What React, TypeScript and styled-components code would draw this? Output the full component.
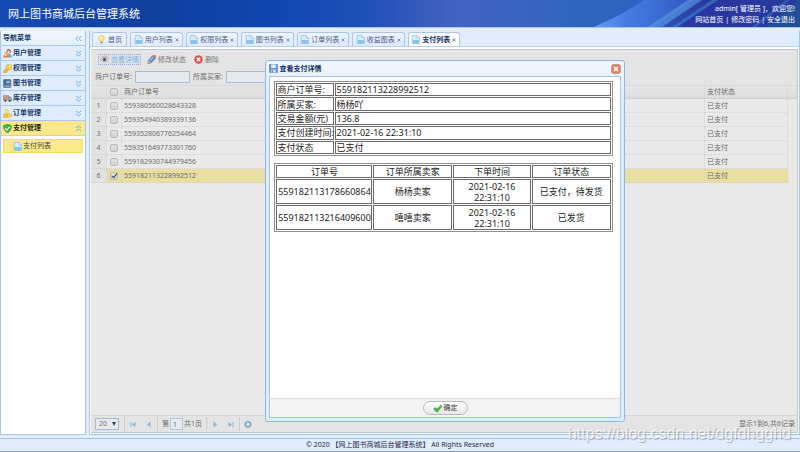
import React from "react";
import styled, { createGlobalStyle, css } from "styled-components";

const GlobalStyle = createGlobalStyle`
  *, *::before, *::after { box-sizing: border-box; }
  body { margin: 0; background: #e3edfb; }
  body, button, input, select, table {
    font-family: "Noto Sans", "Noto Sans CJK SC", sans-serif;
    font-size: 7px;
    line-height: 10px;
  }
  button, input, select { margin: 0; padding: 0; color: inherit; }
`;

const Page = styled.div`
  position: relative;
  display: flex;
  flex-direction: column;
  height: 100vh;
  color: #1d2b45;
`;

const Header = styled.header`
  position: relative;
  flex: none;
  display: flex;
  justify-content: space-between;
  align-items: center;
  height: 27px;
  padding: 0 5px 0 8px;
  color: #fff;
  overflow: hidden;
`;

const HeaderArt = styled.svg`
  position: absolute;
  inset: 0;
  width: 100%;
  height: 100%;
`;

const Title = styled.h1`
  position: relative;
  margin: 0;
  font-size: 11px;
  line-height: 16px;
  font-weight: 400;
`;

const Account = styled.div`
  position: relative;
  display: flex;
  flex-direction: column;
  align-items: flex-end;
  gap: 1px;
  padding-top: 2px;
`;

const Links = styled.nav`
  display: flex;
  gap: 2px;
`;

const HeaderLink = styled.a`
  color: #fff;
  text-decoration: none;
`;

const Main = styled.div`
  flex: 1;
  min-height: 0;
  display: flex;
  gap: 3px;
  padding: 3px 0;
  background: #e3edfb;
  border-top: 1px solid #a9c6ef;
`;

const Sidebar = styled.aside`
  flex: none;
  width: 86px;
  background: #fff;
  border: 1px solid #a3c5f2;
  border-top: 0;
`;

const NavRow = styled.button<{ $active?: boolean; $head?: boolean }>`
  display: flex;
  align-items: center;
  gap: 1px;
  width: 100%;
  height: 15px;
  padding: 0 3px 0 2px;
  border: 0;
  border-bottom: 1px solid #a9c9f4;
  background: ${(p) => (p.$active ? "#fbe88a" : p.$head ? "linear-gradient(#f2f7ff, #e3eeff)" : "#e0ecff")};
  color: #1b3a6b;
  font-weight: 700;
  text-align: left;
  ${(p) => p.$active && css`color: #1d1d1d; border-color: #e3d28a;`}
`;

const NavLabel = styled.span`
  flex: 1;
`;

const SubList = styled.div`
  padding: 3px 2px;
`;

const SubItem = styled.a`
  display: flex;
  align-items: center;
  gap: 1px;
  height: 14px;
  padding-left: 9px;
  border: 1px solid #f7dc55;
  background: #fbea88;
  color: #444;
  text-decoration: none;
`;

const Center = styled.main`
  flex: 1;
  min-width: 0;
  display: flex;
  flex-direction: column;
  border: 1px solid #a3c5f2;
  border-top: 0;
  background: #fff;
`;

const TabBar = styled.div`
  flex: none;
  background: #e0ecff;
  border-bottom: 1px solid #b4d0f5;
  padding: 1px 2px 0;
`;

const TabRow = styled.div`
  display: flex;
  gap: 3px;
  max-width: 368px;
`;

const Tab = styled.div<{ $active?: boolean; $home?: boolean }>`
  display: flex;
  align-items: center;
  justify-content: center;
  flex: ${(p) => (p.$home ? "none" : "1")};
  width: ${(p) => (p.$home ? "35px" : "auto")};
  height: 14px;
  border: 1px solid #a9c6ef;
  border-bottom: 0;
  border-radius: 3px 3px 0 0;
  background: ${(p) => (p.$active ? "#fff" : "linear-gradient(#f1f6ff, #dfeaff)")};
  color: ${(p) => (p.$active ? "#0e2d5f" : "#4a5e80")};
`;

const TabButton = styled.button<{ $active?: boolean }>`
  display: flex;
  align-items: center;
  gap: 2px;
  border: 0;
  background: none;
  font-weight: ${(p) => (p.$active ? 700 : 400)};
  white-space: nowrap;
`;

const CloseTab = styled.button`
  display: flex;
  border: 0;
  padding: 2px 0 2px 2px;
  background: none;
  color: #6f95c8;
`;

const Content = styled.section`
  position: relative;
  flex: 1;
  min-height: 0;
  display: flex;
  flex-direction: column;
  margin: 2px 1px 1px;
  background: #e9e9e9;
  border: 1px solid #bcc7d9;
  border-left: 0;
  color: #6c6c6c;
`;

const Tools = styled.div`
  flex: none;
  background: #e4e4e4;
  padding: 3px 4px 2px;
  border-bottom: 1px solid #d8d8d8;
`;

const ToolRow = styled.div`
  display: flex;
  align-items: center;
  gap: 4px;
  height: 13px;
  padding-left: 3px;
`;

const ToolButton = styled.button<{ $focused?: boolean }>`
  display: flex;
  align-items: center;
  gap: 2px;
  height: 11px;
  padding: 0 1px;
  border: 1px ${(p) => (p.$focused ? "dotted #8ea8ee" : "solid transparent")};
  background: ${(p) => (p.$focused ? "#dae0ea" : "none")};
  color: ${(p) => (p.$focused ? "#86b4e0" : "#777")};
`;

const SearchRow = styled.form`
  display: flex;
  align-items: center;
  gap: 3px;
  height: 17px;
  padding-top: 4px;
`;

const Field = styled.label`
  display: flex;
  align-items: center;
  gap: 3px;
  white-space: nowrap;
`;

const TextBox = styled.input`
  width: 55px;
  height: 12px;
  border: 1px solid #a5bcd9;
  background: #e7e9ee;
`;

const GridWrap = styled.div`
  flex: 1;
  min-height: 0;
  overflow: hidden;
`;

const DataGrid = styled.table`
  width: 100%;
  border-collapse: separate;
  border-spacing: 0;
  table-layout: fixed;
`;

const HeadCell = styled.th<{ $w?: number }>`
  height: 13px;
  width: ${(p) => (p.$w ? `${p.$w}px` : "auto")};
  padding: 0 2px;
  font-weight: 400;
  text-align: left;
  background: linear-gradient(#e6e6e6, #dcdcdc);
  border-right: 1px dotted #cfcfcf;
  border-bottom: 1px solid #d0d0d0;
`;

const GridRow = styled.tr<{ $selected?: boolean }>`
  background: ${(p) => (p.$selected ? "#e8dea0" : "#e9e9e9")};
`;

const Cell = styled.td<{ $gutter?: boolean; $tail?: boolean }>`
  height: 14px;
  padding: 0 2px;
  border-right: 1px dotted #d2d2d2;
  border-bottom: 1px dotted #d2d2d2;
  ${(p) => p.$gutter && css`background: #e2e2e2; text-align: center;`}
  ${(p) => p.$tail && css`background: #e9e9e9; border: 0;`}
`;

const Check = styled.input`
  appearance: none;
  display: block;
  width: 8px;
  height: 8px;
  margin: 0 auto;
  border: 1px solid #b9b9b9;
  border-radius: 2px;
  background: linear-gradient(#e2e2e2, #d2d2d2);
  &:checked::before {
    content: "";
    display: block;
    width: 3px;
    height: 6px;
    margin: -1px 0 0 2px;
    border: solid #444;
    border-width: 0 1px 1px 0;
    transform: rotate(40deg);
  }
`;

const Pager = styled.div`
  flex: none;
  display: flex;
  align-items: center;
  height: 17px;
  padding: 0 2px 0 4px;
  background: #e4e4e4;
  border-top: 1px solid #d3d3d3;
`;

const SelectWrap = styled.span`
  position: relative;
  display: flex;
  margin-right: 5px;
`;

const PageSize = styled.select`
  appearance: none;
  width: 24px;
  height: 12px;
  padding-left: 3px;
  border: 1px solid #a5bcd9;
  border-radius: 0;
  background: #e7e9ee;
`;

const Caret = styled.svg`
  position: absolute;
  right: 3px;
  top: 4px;
  pointer-events: none;
`;

const PagerButton = styled.button`
  display: flex;
  align-items: center;
  justify-content: center;
  width: 16px;
  height: 12px;
  border: 0;
  background: none;
  color: #84b9de;
`;

const Divider = styled.i`
  width: 1px;
  height: 14px;
  background: #cdcdcd;
`;

const PageLabel = styled.label`
  display: flex;
  align-items: center;
  gap: 1px;
  padding: 0 4px;
`;

const PageInput = styled.input`
  width: 13px;
  height: 12px;
  padding-left: 2px;
  border: 1px solid #b5c6dd;
  background: #e7e9ee;
`;

const PagerInfo = styled.span`
  margin-left: auto;
`;

const Overlay = styled.div`
  position: absolute;
  inset: 0 0 0 2px;
  display: flex;
  align-items: center;
  justify-content: center;
`;

const Dialog = styled.div`
  display: flex;
  flex-direction: column;
  width: 51%;
  height: calc(100% - 20px);
  padding: 0 3px 3px;
  border: 1px solid #8fb6ec;
  border-radius: 3px;
  background: linear-gradient(#f0f5ff, #dfebff 40px);
  color: #222;
`;

const DialogHead = styled.div`
  flex: none;
  display: flex;
  align-items: center;
  gap: 1px;
  height: 15px;
  color: #0e2d5f;
  font-weight: 700;
`;

const DialogClose = styled.button`
  display: flex;
  margin-left: auto;
  border: 0;
  background: none;
`;

const DialogBody = styled.div`
  flex: 1;
  min-height: 0;
  padding: 4px 7px 4px 4px;
  border: 1px solid #a3c5f2;
  background: #fff;
`;

const DialogFoot = styled.div`
  flex: none;
  display: flex;
  align-items: center;
  justify-content: center;
  height: 20px;
  border: 1px solid #a3c5f2;
  border-top-color: #ddd;
  margin-top: -1px;
  background: #f3f3f3;
`;

const Confirm = styled.button`
  display: flex;
  align-items: center;
  justify-content: center;
  gap: 2px;
  width: 45px;
  height: 14px;
  border: 1px solid #bbb;
  border-radius: 7px;
  background: linear-gradient(#fff, #e6e6e6);
  color: #333;
`;

const Sheet = styled.table<{ $orders?: boolean }>`
  width: 100%;
  height: ${(p) => (p.$orders ? "69px" : "75px")};
  margin-top: ${(p) => (p.$orders ? "7px" : "0")};
  table-layout: fixed;
  border: 1px solid #8f8f8f;
  border-spacing: 1px;
  font-size: 9px;
  line-height: 11px;
  text-align: ${(p) => (p.$orders ? "center" : "left")};
`;

const sheetCell = css<{ $w?: number }>`
  width: ${(p) => (p.$w ? `${p.$w}px` : "auto")};
  padding: 0;
  border: 1px solid #6a6a6a;
  font-weight: 400;
  white-space: nowrap;
`;
const SheetHead = styled.th`
  ${sheetCell}
`;
const SheetCell = styled.td`
  ${sheetCell}
`;
const Lines = styled.span`
  white-space: pre-line;
`;

const Footer = styled.footer`
  flex: none;
  height: 14px;
  padding-top: 1px;
  border-top: 1px solid #a3c5f2;
  border-bottom: 1px solid #8f9fca;
  background: #e0ecff;
  text-align: center;
`;

const Watermark = styled.div`
  position: absolute;
  right: 9px;
  bottom: 9px;
  font-family: "Liberation Sans", sans-serif;
  font-size: 16px;
  line-height: 18px;
  color: rgba(255, 255, 255, 0.75);
  text-shadow: 1px 1px 1px rgba(110, 110, 110, 0.5);
  pointer-events: none;
`;

type IconName =
  | "page" | "bulb" | "users" | "key" | "book" | "truck" | "order" | "shield"
  | "eye" | "pencil" | "remove" | "save" | "ok";

const art: Record<IconName, React.ReactNode> = {
  page: (
    <>
      <path d="M2 1h9l4 4v10H2z" fill="#d9ecfb" stroke="#7ba9dc" />
      <path d="M3 9h11v6H3z" fill="#7fc4f0" />
      <path d="M11 1v4h4" fill="#fff" stroke="#7ba9dc" />
    </>
  ),
  bulb: (
    <>
      <path d="M8 1a5 5 0 0 0-3 9l1 2h4l1-2a5 5 0 0 0-3-9z" fill="#fbe37a" stroke="#e0b84a" />
      <path d="M6 12h4v3H6z" fill="#8a94a8" />
      <circle cx="7" cy="5" r="2" fill="#fffbe0" />
    </>
  ),
  users: (
    <>
      <circle cx="10" cy="4" r="4" fill="#a8703f" />
      <circle cx="10" cy="5" r="2.500" fill="#f3c79c" />
      <path d="M5 15c0-5 2-6 5-6s6 1 6 6z" fill="#7fa3cc" />
      <circle cx="5" cy="8" r="3" fill="#e8bd7c" />
      <path d="M0 15c0-4 2-5 5-5s5 1 5 5z" fill="#d98f3f" />
      <path d="M3 10l2 3 2-3z" fill="#fff" />
    </>
  ),
  key: (
    <>
      <path d="M7 7l3 3-5 6H1v-4z" fill="#f0b52e" stroke="#d59a2a" />
      <circle cx="10.500" cy="5.500" r="5" fill="#f9cf4e" stroke="#dda62f" />
      <circle cx="12" cy="4" r="1.500" fill="#fff" />
    </>
  ),
  book: (
    <>
      <rect x="1" y="1" width="13" height="14" rx="1" fill="#4f7ca8" stroke="#345d88" />
      <path d="M4 1v14" stroke="#2c4c70" />
      <path d="M6 4h6v3H6z" fill="#a6c6e2" />
      <path d="M2 13h12" stroke="#e8eef5" />
    </>
  ),
  truck: (
    <>
      <path d="M0 3h10v8H0z" fill="#b7a596" stroke="#8a7868" />
      <path d="M1 6h8v2H1z" fill="#d88b55" />
      <path d="M10 5h3l3 3v4h-6z" fill="#8fb0da" stroke="#6280aa" />
      <circle cx="4" cy="12" r="2" fill="#555" />
      <circle cx="12" cy="12" r="2" fill="#555" />
    </>
  ),
  order: (
    <>
      <path d="M4 1h5v8H4z" fill="#ffe488" stroke="#ebb640" />
      <path d="M1 9h7v6H1z" fill="#f8c23c" stroke="#e6a62e" />
      <path d="M8 9l6-1 2 5-6 2z" fill="#ffd65e" stroke="#e6a62e" />
    </>
  ),
  shield: (
    <>
      <path d="M8 0l7 3c0 6-2 10-7 13C3 13 1 9 1 3z" fill="#3fb54a" stroke="#268a36" />
      <path d="M4 8l3 3 5-6" fill="none" stroke="#fff" strokeWidth="2" />
    </>
  ),
  eye: (
    <>
      <path d="M0 8q8-9 16 0-8 8-16 0z" fill="#e9e3da" stroke="#b8946a" />
      <circle cx="8" cy="8" r="3.500" fill="#5b80aa" />
      <circle cx="8" cy="8" r="1.500" fill="#222f44" />
      <path d="M1 5q7-6 14 0" fill="none" stroke="#c59a6a" />
    </>
  ),
  pencil: (
    <>
      <path d="M3 9l7-8 5 5-8 8z" fill="#4f93d0" stroke="#3a78b4" />
      <path d="M5 10l7-7" stroke="#a8d2f2" strokeWidth="2" />
      <path d="M10 2l2-2c2-1 5 2 4 4l-2 2z" fill="#d8725f" />
      <path d="M3 9l4 5-6 2z" fill="#e8c79c" stroke="#7b6a55" />
    </>
  ),
  remove: (
    <>
      <circle cx="8" cy="8" r="7.500" fill="#dc4f4b" />
      <path d="M5 5l6 6M11 5l-6 6" stroke="#fff" strokeWidth="2.500" />
    </>
  ),
  save: (
    <>
      <path d="M1 1h14v14H1z" fill="#5e92de" stroke="#3f71bd" />
      <path d="M4 1h8v6H4z" fill="#f3f8ff" />
      <path d="M4 10h8v5H4z" fill="#dbe7f7" />
      <path d="M5 11h2v4H5z" fill="#3f71bd" />
    </>
  ),
  ok: <path d="M1 9l3-3 3 3 7-7 2 2-9 11z" fill="#4db848" stroke="#349334" />,
};

function Icon({ name, size = 9 }: { name: IconName; size?: number }) {
  return (
    <svg width={size} height={size} viewBox="0 0 16 16" aria-hidden="true">
      {art[name]}
    </svg>
  );
}

function Chevrons({ d }: { d: string }) {
  return (
    <svg width="7" height="7" viewBox="0 0 14 14" fill="none" stroke="#6fb2ea" strokeWidth="2" aria-hidden="true">
      <path d={d} />
    </svg>
  );
}

const DOWN = "M2 2l5 4 5-4M2 8l5 4 5-4";
const UP = "M2 6l5-4 5 4M2 12l5-4 5 4";
const LEFT = "M6 2L2 7l4 5M12 2L8 7l4 5";

const menu: [IconName, string][] = [
  ["users", "用户管理"],
  ["key", "权限管理"],
  ["book", "图书管理"],
  ["truck", "库存管理"],
  ["order", "订单管理"],
];

const tabs = ["用户列表", "权限列表", "图书列表", "订单列表", "收益图表", "支付列表"];

const payments = [
  "559380560028643328",
  "559354940389339136",
  "559352806776254464",
  "559351649773301760",
  "559182930744979456",
  "559182113228992512",
];

const details = [
  ["商户订单号:", "559182113228992512"],
  ["所属买家:", "杨杨吖"],
  ["交易金额(元)", "136.8"],
  ["支付创建时间:", "2021-02-16 22:31:10"],
  ["支付状态", "已支付"],
];

const orders = [
  ["559182113178660864", "杨杨卖家", "2021-02-16\n22:31:10", "已支付，待发货"],
  ["559182113216409600", "嘻嘻卖家", "2021-02-16\n22:31:10", "已发货"],
];

function PagerIcon({ d }: { d: string }) {
  return (
    <svg width="6" height="7" viewBox="0 0 12 14" fill="currentColor" aria-hidden="true">
      <path d={d} />
    </svg>
  );
}

function Banner() {
  return (
    <HeaderArt viewBox="0 0 800 27" preserveAspectRatio="none" aria-hidden="true">
      <defs>
        <linearGradient id="base">
          <stop offset="0" stopColor="#164bb4" />
          <stop offset="0.2" stopColor="#0f3e9f" />
          <stop offset="0.35" stopColor="#1146b0" />
          <stop offset="0.46" stopColor="#1f50b8" />
          <stop offset="0.57" stopColor="#4363c0" />
          <stop offset="0.72" stopColor="#2f66bb" />
          <stop offset="0.8" stopColor="#2f62c2" />
          <stop offset="0.88" stopColor="#2c3aa2" />
          <stop offset="1" stopColor="#1d4a92" />
        </linearGradient>
        <linearGradient id="beam">
          <stop offset="0" stopColor="#6a9cf5" />
          <stop offset="0.3" stopColor="#477ce4" />
          <stop offset="1" stopColor="#3a68cf" stopOpacity="0.5" />
        </linearGradient>
      </defs>
      <rect width="800" height="27" fill="url(#base)" />
      <path d="M594 27Q624 14 644 0H694L652 27z" fill="url(#beam)" />
      <path d="M648 27L688 0H702L662 27z" fill="#5c9fe6" opacity="0.6" />
      <path d="M678 27L716 0H800V27z" fill="#2b35a0" opacity="0.7" />
      <path d="M672 27L712 0H718L677 27z" fill="#3c8fcf" opacity="0.5" />
      <path d="M752 27L786 0H790L756 27z" fill="#3b8fcb" opacity="0.45" />
      <path d="M766 27L798 0H800V27z" fill="#1d5496" opacity="0.8" />
    </HeaderArt>
  );
}

export default function App() {
  return (
    <>
      <GlobalStyle />
      <Page lang="zh-CN">
        <Header>
          <Banner />
          <Title>网上图书商城后台管理系统</Title>
          <Account>
            <span>admin[ 管理员 ]，欢迎您!</span>
            <Links>
              <HeaderLink href="#home">网站首页</HeaderLink>|
              <HeaderLink href="#password">修改密码</HeaderLink>|
              <HeaderLink href="#logout">安全退出</HeaderLink>
            </Links>
          </Account>
        </Header>

        <Main>
          <Sidebar>
            <NavRow $head>
              <NavLabel>导航菜单</NavLabel>
              <Chevrons d={LEFT} />
            </NavRow>
            {menu.map(([icon, label]) => (
              <NavRow key={label}>
                <Icon name={icon} />
                <NavLabel>{label}</NavLabel>
                <Chevrons d={DOWN} />
              </NavRow>
            ))}
            <NavRow $active>
              <Icon name="shield" />
              <NavLabel>支付管理</NavLabel>
              <Chevrons d={UP} />
            </NavRow>
            <SubList>
              <SubItem href="#payments">
                <Icon name="page" />
                支付列表
              </SubItem>
            </SubList>
          </Sidebar>

          <Center>
            <TabBar>
              <TabRow>
                <Tab $home>
                  <TabButton>
                    <Icon name="bulb" />
                    首页
                  </TabButton>
                </Tab>
                {tabs.map((label, i) => {
                  const active = i === tabs.length - 1;
                  return (
                    <Tab key={label} $active={active}>
                      <TabButton $active={active}>
                        <Icon name="page" />
                        {label}
                      </TabButton>
                      <CloseTab aria-label={`关闭${label}`}>
                        <svg width="4" height="4" viewBox="0 0 8 8" stroke="currentColor" strokeWidth="2">
                          <path d="M1 1l6 6M7 1L1 7" />
                        </svg>
                      </CloseTab>
                    </Tab>
                  );
                })}
              </TabRow>
            </TabBar>

            <Content>
              <Tools>
                <ToolRow>
                  <ToolButton $focused>
                    <Icon name="eye" />
                    查看详情
                  </ToolButton>
                  <ToolButton>
                    <Icon name="pencil" />
                    修改状态
                  </ToolButton>
                  <ToolButton>
                    <Icon name="remove" />
                    删除
                  </ToolButton>
                </ToolRow>
                <SearchRow>
                  <Field>
                    商户订单号:
                    <TextBox type="text" />
                  </Field>
                  <Field>
                    所属买家:
                    <TextBox type="text" />
                  </Field>
                </SearchRow>
              </Tools>

              <GridWrap>
                <DataGrid>
                  <thead>
                    <tr>
                      <HeadCell $w={16} />
                      <HeadCell $w={15}>
                        <Check type="checkbox" aria-label="全选" />
                      </HeadCell>
                      <HeadCell>商户订单号</HeadCell>
                      <HeadCell $w={83}>支付状态</HeadCell>
                      <HeadCell $w={9} />
                    </tr>
                  </thead>
                  <tbody>
                    {payments.map((id, i) => (
                      <GridRow key={id} $selected={i === 5}>
                        <Cell $gutter>{i + 1}</Cell>
                        <Cell>
                          <Check type="checkbox" defaultChecked={i === 5} aria-label={id} />
                        </Cell>
                        <Cell>{id}</Cell>
                        <Cell>已支付</Cell>
                        <Cell $tail />
                      </GridRow>
                    ))}
                  </tbody>
                </DataGrid>
              </GridWrap>

              <Pager>
                <SelectWrap>
                  <PageSize aria-label="每页条数" defaultValue="20">
                    <option>20</option>
                    <option>50</option>
                  </PageSize>
                  <Caret width="4" height="4" viewBox="0 0 4 4">
                    <path d="M0 0h4L2 4z" fill="#444" />
                  </Caret>
                </SelectWrap>
                <Divider />
                <PagerButton aria-label="第一页"><PagerIcon d="M1 2h2v10H1zM11 2v10L4 7z" /></PagerButton>
                <PagerButton aria-label="上一页"><PagerIcon d="M9 1v12L2 7z" /></PagerButton>
                <Divider />
                <PageLabel>
                  第<PageInput type="text" defaultValue="1" />共1页
                </PageLabel>
                <Divider />
                <PagerButton aria-label="下一页"><PagerIcon d="M3 1v12l7-6z" /></PagerButton>
                <PagerButton aria-label="最后一页"><PagerIcon d="M9 2h2v10H9zM1 2v10l7-5z" /></PagerButton>
                <Divider />
                <PagerButton aria-label="刷新">
                  <svg width="8" height="8" viewBox="0 0 16 16" fill="none" stroke="#5a9fd0" strokeWidth="3">
                    <path d="M5 4a5.500 5.500 0 1 0 6 0" />
                    <path d="M7 0l4 4-4 3z" fill="#5a9fd0" stroke="none" />
                  </svg>
                </PagerButton>
                <PagerInfo>显示1到6,共6记录</PagerInfo>
              </Pager>

              <Overlay>
                <Dialog role="dialog" aria-labelledby="dialog-title">
                  <DialogHead>
                    <Icon name="save" />
                    <span id="dialog-title">查看支付详情</span>
                    <DialogClose aria-label="关闭">
                      <svg width="10" height="10" viewBox="0 0 20 20">
                        <rect x="1" y="1" width="18" height="18" rx="4" fill="#de8467" stroke="#c0705a" />
                        <path d="M6 6l8 8M14 6l-8 8" stroke="#fff" strokeWidth="3" />
                      </svg>
                    </DialogClose>
                  </DialogHead>
                  <DialogBody>
                    <Sheet>
                      <tbody>
                        {details.map(([label, value]) => (
                          <tr key={label}>
                            <SheetHead scope="row" $w={58}>{label}</SheetHead>
                            <SheetCell>{value}</SheetCell>
                          </tr>
                        ))}
                      </tbody>
                    </Sheet>
                    <Sheet $orders>
                      <thead>
                        <tr>
                          <SheetHead $w={96}>订单号</SheetHead>
                          <SheetHead>订单所属卖家</SheetHead>
                          <SheetHead>下单时间</SheetHead>
                          <SheetHead>订单状态</SheetHead>
                        </tr>
                      </thead>
                      <tbody>
                        {orders.map((row) => (
                          <tr key={row[0]}>
                            {row.map((value) => (
                              <SheetCell key={value}>
                                <Lines>{value}</Lines>
                              </SheetCell>
                            ))}
                          </tr>
                        ))}
                      </tbody>
                    </Sheet>
                  </DialogBody>
                  <DialogFoot>
                    <Confirm>
                      <Icon name="ok" />
                      确定
                    </Confirm>
                  </DialogFoot>
                </Dialog>
              </Overlay>
            </Content>
          </Center>
        </Main>

        <Footer>© 2020 【网上图书商城后台管理系统】 All Rights Reserved</Footer>
        <Watermark>https://blog.csdn.net/dgfdhgghd</Watermark>
      </Page>
    </>
  );
}
